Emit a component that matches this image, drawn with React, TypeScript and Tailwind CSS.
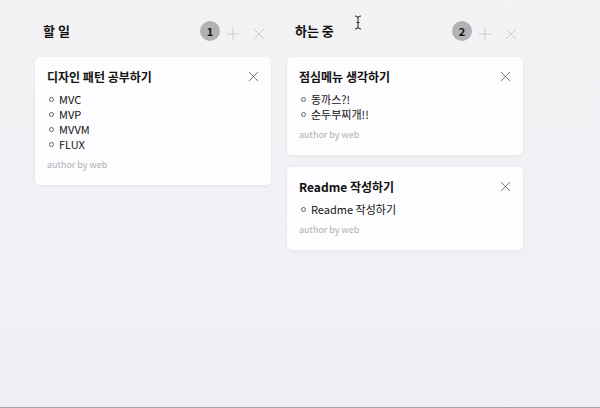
import { Plus, X } from "lucide-react";

interface Todo {
  id: number;
  title: string;
  items: string[];
  author: string;
}

interface Column {
  id: string;
  title: string;
  todos: Todo[];
}

const COLUMNS: Column[] = [
  {
    id: "todo",
    title: "할 일",
    todos: [
      { id: 1, title: "디자인 패턴 공부하기", items: ["MVC", "MVP", "MVVM", "FLUX"], author: "web" },
    ],
  },
  {
    id: "doing",
    title: "하는 중",
    todos: [
      { id: 2, title: "점심메뉴 생각하기", items: ["동까스?!", "순두부찌개!!"], author: "web" },
      { id: 3, title: "Readme 작성하기", items: ["Readme 작성하기"], author: "web" },
    ],
  },
];

function TodoCard({ todo }: { todo: Todo }) {
  return (
    <div className="rounded-[5px] bg-[#fdfcfe] px-3 pt-3 pb-[14px] shadow-[0_1px_4px_rgba(0,0,0,0.06)]">
      <div className="flex h-4 items-center justify-between">
        <h3 className="text-[12px] font-bold leading-4 text-[#111]">{todo.title}</h3>
        <button type="button" className="-mr-[3px] -mt-[1px] text-[#555]">
          <X className="h-[17px] w-[17px]" strokeWidth={1.1} />
        </button>
      </div>
      <ul className="mt-[7px] pl-[2px]">
        {todo.items.map((item) => (
          <li key={item} className="flex items-center gap-[5px] text-[11px] leading-[15px] text-[#111]">
            <span className="h-[5px] w-[5px] rounded-full border border-[#666]" />
            {item}
          </li>
        ))}
      </ul>
      <p className="mt-[7px] text-[9px] leading-3 text-[#b0afb3]">author by {todo.author}</p>
    </div>
  );
}

function BoardColumn({ column }: { column: Column }) {
  return (
    <section className="w-[236px]">
      <header className="flex h-[26px] items-center justify-between pl-2 pr-[2px]">
        <h2 className="text-[13px] font-bold text-[#111]">{column.title}</h2>
        <div className="flex items-center">
          <span className="flex h-5 w-5 items-center justify-center rounded-full bg-[#b2b1b4] text-[11px] font-bold text-[#111]">
            {column.todos.length}
          </span>
          <button type="button" className="ml-[3px] mt-[5px] text-[#c6c5c8]">
            <Plus className="h-5 w-5" strokeWidth={1} />
          </button>
          <button type="button" className="ml-[6px] mt-[5px] text-[#c6c5c8]">
            <X className="h-5 w-5" strokeWidth={1} />
          </button>
        </div>
      </header>
      <div className="mt-[13px] flex flex-col gap-3">
        {column.todos.map((todo) => (
          <TodoCard key={todo.id} todo={todo} />
        ))}
      </div>
    </section>
  );
}

export default function App() {
  return (
    <main
      className="relative h-[408px] w-[600px] overflow-hidden border-b border-[#a3a2a8] bg-gradient-to-b from-[#f3f2f5] to-[#f1eff3] pl-[35px] pt-[18px]"
      style={{ fontFamily: '"Noto Sans CJK KR", "Noto Sans", sans-serif' }}
    >
      <div className="flex gap-4">
        {COLUMNS.map((column) => (
          <BoardColumn key={column.id} column={column} />
        ))}
      </div>
      {/* text cursor caught in the capture */}
      <svg className="pointer-events-none absolute left-[354px] top-[15px]" width="8" height="15" viewBox="0 0 8 15">
        <path d="M1 1 Q4 1 4 3 L4 12 Q4 14 1 14 M7 1 Q4 1 4 3 M4 12 Q4 14 7 14 M2.5 7.5 H5.5" fill="none" stroke="#222" strokeWidth="1" />
      </svg>
    </main>
  );
}
